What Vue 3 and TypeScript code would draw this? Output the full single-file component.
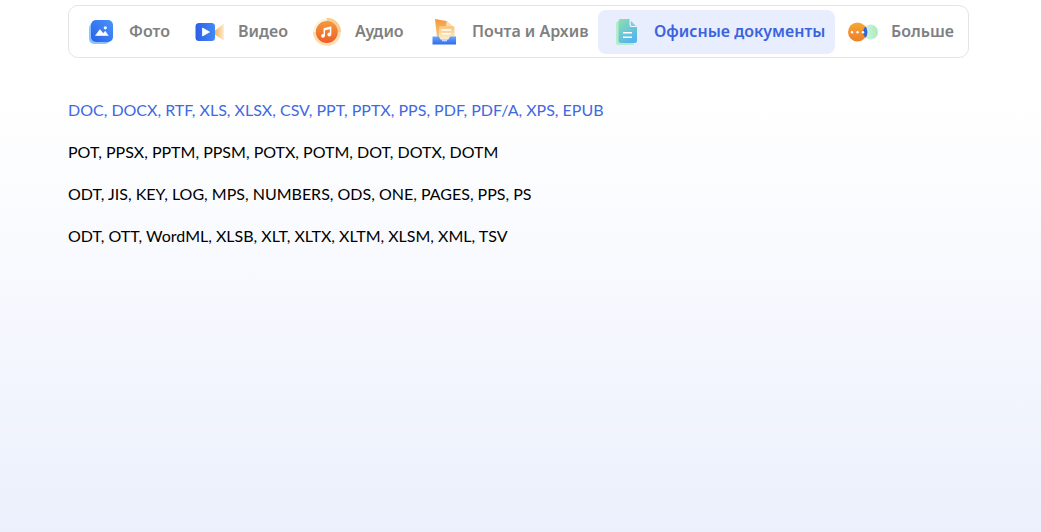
<script setup lang="ts">
import { ref } from 'vue'

interface Category {
  id: string
  label: string
}

const categories: Category[] = [
  { id: 'photo', label: 'Фото' },
  { id: 'video', label: 'Видео' },
  { id: 'audio', label: 'Аудио' },
  { id: 'mail', label: 'Почта и Архив' },
  { id: 'office', label: 'Офисные документы' },
  { id: 'more', label: 'Больше' },
]

const active = ref<string>('office')

const formats: string[] = [
  'DOC, DOCX, RTF, XLS, XLSX, CSV, PPT, PPTX, PPS, PDF, PDF/A, XPS, EPUB',
  'POT, PPSX, PPTM, PPSM, POTX, POTM, DOT, DOTX, DOTM',
  'ODT, JIS, KEY, LOG, MPS, NUMBERS, ODS, ONE, PAGES, PPS, PS',
  'ODT, OTT, WordML, XLSB, XLT, XLTX, XLTM, XLSM, XML, TSV',
]
</script>

<template>
  <main class="page">
    <div class="tabs" role="tablist">
      <button
        v-for="item in categories"
        :key="item.id"
        type="button"
        role="tab"
        class="tab"
        :class="{ active: active === item.id }"
        :aria-selected="active === item.id"
        @click="active = item.id"
      >
        <svg v-if="item.id === 'photo'" class="icon" viewBox="0 0 32 32" aria-hidden="true">
          <defs>
            <linearGradient id="photo-front" x1="0" y1="1" x2="1" y2="0">
              <stop offset="0" stop-color="#2a5fe8" />
              <stop offset="1" stop-color="#4795fb" />
            </linearGradient>
          </defs>
          <rect x="4" y="7" width="21" height="21" rx="5" fill="#86c5ff" />
          <rect x="6" y="4" width="22" height="22" rx="5" fill="url(#photo-front)" />
          <path d="M10.5 19.5 15 13.5l3.200 4 2-2.300 3 4.300z" fill="#fff" stroke="#fff" stroke-width=".6" stroke-linejoin="round" />
          <circle cx="20.300" cy="11.800" r="1.600" fill="#fff" />
        </svg>

        <svg v-else-if="item.id === 'video'" class="icon" viewBox="0 0 32 32" aria-hidden="true">
          <defs>
            <linearGradient id="video-body" x1="0" y1="0" x2="1" y2="0">
              <stop offset="0" stop-color="#2b5fe9" />
              <stop offset="1" stop-color="#4389f5" />
            </linearGradient>
            <linearGradient id="video-lens" x1="0" y1="0" x2="1" y2="0">
              <stop offset="0" stop-color="#f3ad55" />
              <stop offset="1" stop-color="#fdebcb" />
            </linearGradient>
          </defs>
          <path d="M20 15.5 29.8 7.5v17L20 18z" fill="url(#video-lens)" />
          <rect x="1.500" y="7" width="19.500" height="18" rx="3.500" fill="url(#video-body)" />
          <path d="M8.500 12v8l7-4z" fill="#fff" stroke="#fff" stroke-width=".8" stroke-linejoin="round" />
        </svg>

        <svg v-else-if="item.id === 'audio'" class="icon" viewBox="0 0 32 32" aria-hidden="true">
          <defs>
            <linearGradient id="audio-disc" x1="0" y1="0" x2="0" y2="1">
              <stop offset="0" stop-color="#f49a3c" />
              <stop offset="1" stop-color="#ee5d27" />
            </linearGradient>
          </defs>
          <circle cx="15.800" cy="16" r="13.600" fill="#fdf1dd" />
          <path d="M15.800 2a14 14 0 0 1 0 28z" fill="#fcdfb5" />
          <path d="M15.800 1.800a14.200 14.200 0 0 1 14.200 14.200h-14.200z" fill="#f9cd91" />
          <path d="M15.800 29.800A13.800 13.800 0 0 1 2 16h13.800z" fill="#fadcae" />
          <circle cx="15.800" cy="16" r="11" fill="url(#audio-disc)" />
          <path d="M13.300 19.800v-7l6.300-1.500v7" fill="none" stroke="#fff" stroke-width="1.500" />
          <path d="M13.300 12.600l6.300-1.500v2l-6.300 1.500z" fill="#fff" />
          <circle cx="12" cy="19.800" r="1.900" fill="#fff" />
          <circle cx="18.300" cy="18.500" r="1.900" fill="#fff" />
        </svg>

        <svg v-else-if="item.id === 'mail'" class="icon" viewBox="0 0 32 32" aria-hidden="true">
          <defs>
            <linearGradient id="mail-tray" x1="0" y1="0" x2="0" y2="1">
              <stop offset="0" stop-color="#66a8fa" />
              <stop offset="1" stop-color="#2e6af0" />
            </linearGradient>
            <linearGradient id="mail-back" x1="0" y1="0" x2="0" y2="1">
              <stop offset="0" stop-color="#f09a3c" />
              <stop offset="1" stop-color="#f9c984" />
            </linearGradient>
            <linearGradient id="mail-sheet" x1="0" y1="0" x2="0" y2="1">
              <stop offset="0" stop-color="#f9c47a" />
              <stop offset="1" stop-color="#fff3df" />
            </linearGradient>
          </defs>
          <path d="M7 3 18.500 5l5.500 5-1 12H9z" fill="url(#mail-back)" />
          <path d="M18.500 5l-.5 5 6 .8v-.8z" fill="#fbdcae" />
          <rect x="11" y="10" width="15.500" height="16" rx="2" fill="url(#mail-sheet)" />
          <path d="M13.500 14h9.500M13.500 17.800h9.500" stroke="#fff" stroke-width="1.500" />
          <path d="M4.500 20.500h6c1 0 1.200 3.200 3 3.200h6c1.800 0 2-3.200 3-3.200h5.500v8h-23.500z" fill="url(#mail-tray)" />
          <path d="M14 24.700h5" stroke="#cce2ff" stroke-width="1.200" />
        </svg>

        <svg v-else-if="item.id === 'office'" class="icon" viewBox="0 0 32 32" aria-hidden="true">
          <defs>
            <linearGradient id="doc-front" x1="0" y1="0" x2=".6" y2="1">
              <stop offset="0" stop-color="#8ce0ae" />
              <stop offset="1" stop-color="#55b5ee" />
            </linearGradient>
          </defs>
          <path d="M9 5h10v20l5 3v1H8a2 2 0 0 1-2-2V8a3 3 0 0 1 3-3z" fill="#b5edca" />
          <path d="M10.500 3h9l7.500 8v13.500a2.500 2.500 0 0 1-2.500 2.500h-13.500a2.500 2.500 0 0 1-2.500-2.500V5a2 2 0 0 1 2-2z" fill="url(#doc-front)" />
          <path d="M19.500 3v6a2 2 0 0 0 2 2h5.500z" fill="#f4f8ff" />
          <path d="M20.700 4.800v4.200a1 1 0 0 0 1 1h4z" fill="#7fcbe6" />
          <path d="M13 16.700h9M13 21.300h9" stroke="#fff" stroke-width="1.500" />
        </svg>

        <svg v-else class="icon" viewBox="0 0 32 32" aria-hidden="true">
          <defs>
            <linearGradient id="more-front" x1="0" y1="0" x2="0" y2="1">
              <stop offset="0" stop-color="#f6a935" />
              <stop offset="1" stop-color="#ed7d28" />
            </linearGradient>
            <linearGradient id="more-back" x1="0" y1="0" x2="1" y2="0">
              <stop offset="0" stop-color="#d5f7e0" />
              <stop offset="1" stop-color="#a9ebc0" />
            </linearGradient>
            <clipPath id="more-overlap">
              <circle cx="23.500" cy="16" r="7.500" />
            </clipPath>
          </defs>
          <circle cx="23.500" cy="16" r="7.500" fill="url(#more-back)" />
          <circle cx="10.500" cy="16" r="9.500" fill="url(#more-front)" />
          <circle cx="11" cy="16" r="9.500" fill="#2f66dc" clip-path="url(#more-overlap)" />
          <circle cx="5" cy="16.300" r="1.200" fill="#fff" />
          <circle cx="10.500" cy="16.300" r="1.200" fill="#fff" />
          <circle cx="16" cy="16.300" r="1.200" fill="#fff" />
        </svg>

        <span class="label">{{ item.label }}</span>
      </button>
    </div>

    <ul class="formats">
      <li v-for="(line, index) in formats" :key="index" :class="{ primary: index === 0 }">{{ line }}</li>
    </ul>
  </main>
</template>

<style>
body {
  margin: 0;
}
</style>

<style scoped>
.page {
  box-sizing: border-box;
  min-height: 100vh;
  padding: 5px 72px 40px 68px;
  background: linear-gradient(180deg, #ffffff 0%, #ffffff 18%, #f6f8fe 58%, #ebf0fc 100%);
  font-family: Lato, "Noto Sans", sans-serif;
}

.tabs {
  display: grid;
  grid-template-columns: 109fr 117fr 117fr 182fr 237fr 129fr;
  padding: 4px 4px 3px;
  border: 1px solid #e4e4e4;
  border-radius: 10px;
  background: #ffffff;
}

.tab {
  display: flex;
  align-items: center;
  gap: 12px;
  height: 44px;
  padding: 0 0 0 12px;
  border: 0;
  border-radius: 8px;
  background: transparent;
  color: #808080;
  font-family: "Noto Sans", sans-serif;
  font-size: 16px;
  font-weight: 600;
  line-height: 24px;
  white-space: nowrap;
  cursor: pointer;
}

.tab.active {
  background: #e8eefd;
  color: #3b63e0;
}

.label {
  padding-bottom: 3px;
}

.icon {
  flex: none;
  width: 32px;
  height: 32px;
}

.formats {
  margin: 31px 0 0;
  padding: 0;
  list-style: none;
  color: #000000;
  font-size: 16px;
  line-height: 42px;
}

.formats .primary {
  color: #4169e1;
}
</style>
